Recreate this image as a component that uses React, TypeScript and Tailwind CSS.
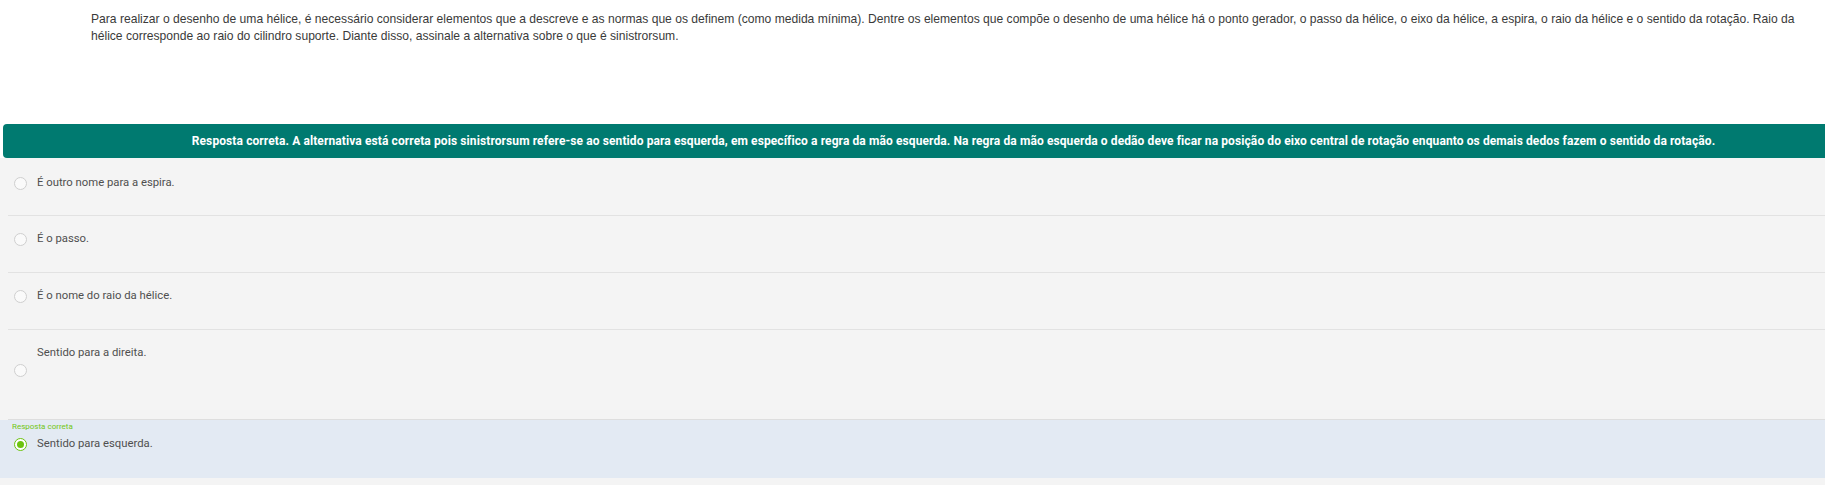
import React from 'react';

const options = [
  { text: 'É outro nome para a espira.', pad: 'pt-[18px] pb-[25px]' },
  { text: 'É o passo.', pad: 'pt-[16px] pb-[26px]' },
  { text: 'É o nome do raio da hélice.', pad: 'pt-[16px] pb-[26px]' },
];

function Radio({ checked }: { checked?: boolean }) {
  if (checked) {
    return (
      <span className="flex h-[13px] w-[13px] shrink-0 items-center justify-center rounded-full border-[1.5px] border-[#6cc30f] bg-white">
        <span className="h-[7px] w-[7px] rounded-full bg-[#6cc30f]" />
      </span>
    );
  }
  return <span className="block h-[13px] w-[13px] shrink-0 rounded-full border border-[#cfcfcf] bg-[#fafafa]" />;
}

export default function App() {
  return (
    <div className="h-[490px] w-[1825px] overflow-hidden bg-white">
      <div className="w-[1904px]">
        {/* enunciado */}
        <div className="pl-[91px] pt-[11px]">
          <p className="w-[1728px] text-[12.1px] leading-[17px] text-[#3a3a3a] [font-family:'Liberation_Sans',Arial,sans-serif]">
            Para realizar o desenho de uma hélice, é necessário considerar elementos que a descreve e as normas que os
            definem (como medida mínima). Dentre os elementos que compõe o desenho de uma hélice há o ponto gerador, o
            passo da hélice, o eixo da hélice, a espira, o raio da hélice e o sentido da rotação. Raio da hélice
            corresponde ao raio do cilindro suporte. Diante disso, assinale a alternativa sobre o que é sinistrorsum.
          </p>
        </div>

        <div className="mt-[79px] pl-[3px]">
          <div className="flex h-[34px] items-center justify-center rounded-[4px] bg-[#007a70] text-[12px] font-bold tracking-[0.1px] text-white [font-family:Roboto,sans-serif]">
            Resposta correta. A alternativa está correta pois sinistrorsum refere-se ao sentido para esquerda, em
            específico a regra da mão esquerda. Na regra da mão esquerda o dedão deve ficar na posição do eixo central
            de rotação enquanto os demais dedos fazem o sentido da rotação.
          </div>
        </div>

        <div className="bg-[#f4f4f4] pb-[7px] text-[11.3px] leading-[14px] text-[#4f4f4f] [font-family:Roboto,sans-serif]">
          {options.map((o) => (
            <div key={o.text} className="pl-[8px]">
              <div className={`flex items-center border-b border-[#e2e2e2] pl-[6px] ${o.pad}`}>
                <Radio />
                <span className="ml-[10px]">{o.text}</span>
              </div>
            </div>
          ))}

          <div className="pl-[8px]">
            <div className="flex flex-col border-b border-[#dedede] pb-[42px] pl-[6px] pt-[16px]">
              <span className="ml-[23px]">Sentido para a direita.</span>
              <span className="mt-[4px]">
                <Radio />
              </span>
            </div>
          </div>

          <div className="h-[58px] bg-[#e3eaf3] pl-[14px] pt-[2px]">
            <div className="-ml-[2px] text-[8px] leading-[9px] text-[#72c614]">Resposta correta</div>
            <div className="mt-[6px] flex items-center">
              <Radio checked />
              <span className="ml-[10px]">Sentido para esquerda.</span>
            </div>
          </div>
        </div>
      </div>
    </div>
  );
}
